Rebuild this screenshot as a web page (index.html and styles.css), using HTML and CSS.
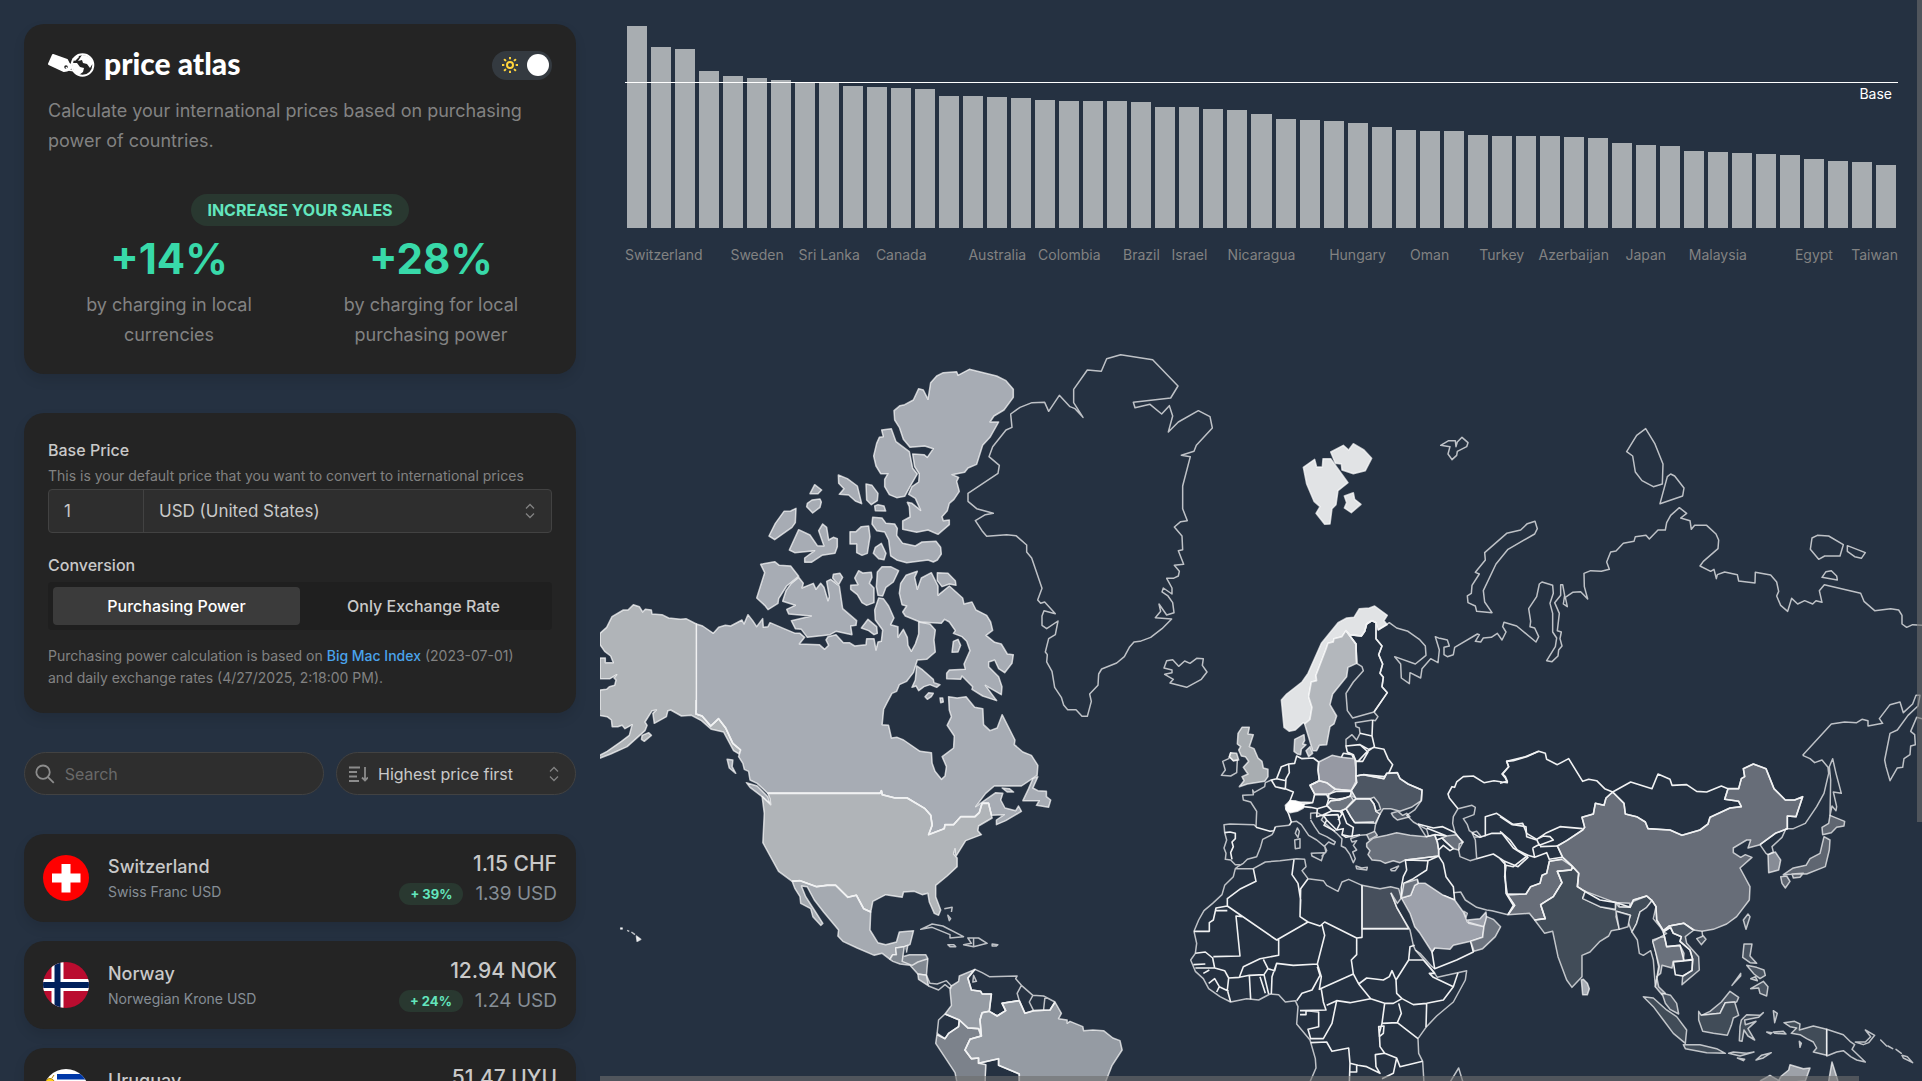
FILE: index.html
```html
<!DOCTYPE html>
<html lang="en">
<head>
<meta charset="utf-8">
<meta name="viewport" content="width=device-width, initial-scale=1">
<title>Price Atlas</title>
<link rel="stylesheet" href="styles.css">
</head>
<body>
<div class="app">
  <aside class="sidebar">
    <section class="card intro">
      <header class="brand-row">
        <a class="brand" href="#">
          <svg class="brand-icon" viewBox="0 0 47 26" aria-hidden="true">
            <path d="M5 3 19 8Q20 12 24 14Q22 19 16 19L1 12Z" fill="#fff" stroke="#fff" stroke-width="2" stroke-linejoin="round"/>
            <circle cx="18" cy="15" r="1.8" fill="#242424"/>
            <path d="M18 15Q21 20 27 18" fill="none" stroke="#fff" stroke-width="1.4"/>
            <circle cx="34.500" cy="13" r="10.800" fill="#242424" stroke="#fff" stroke-width="2"/>
            <path d="M34 3Q42 3 45 11L42 16 39 12 35 11 34 8 30 9ZM24 11 29 11 32 15 36 16 35 20 31 23Q24 20 24 11ZM24 7 30 3 31 5 27 9Z" fill="#fff"/>
          </svg>
          <span>price atlas</span>
        </a>
        <label class="theme">
          <input type="checkbox" checked aria-label="Dark theme">
          <svg viewBox="0 0 16 16" aria-hidden="true"><circle cx="8" cy="8" r="3"/><path d="M8 .5v1M8 14.500v1M.5 8h1M14.500 8h1M2.700 2.700l.7.7M12.600 12.600l.7.700M2.700 13.300l.7-.7M12.600 3.400l.7-.7"/></svg>
        </label>
      </header>
      <p class="lead">Calculate your international prices based on purchasing power of countries.</p>
      <p class="pill">INCREASE YOUR SALES</p>
      <div class="gains">
        <div><strong>+14%</strong><p>by charging in local currencies</p></div>
        <div><strong>+28%</strong><p>by charging for local purchasing power</p></div>
      </div>
    </section>

    <section class="card settings">
      <label class="title" for="amount">Base Price</label>
      <p class="hint">This is your default price that you want to convert to international prices</p>
      <div class="price-field">
        <input id="amount" type="text" value="1">
        <div class="picker">
          <select aria-label="Currency"><option>USD (United States)</option></select>
          <svg class="updown" viewBox="0 0 10 16" aria-hidden="true"><path d="M1 5.500 5 1.500 9 5.500M1 10.500 5 14.500 9 10.500"/></svg>
        </div>
      </div>
      <fieldset class="conversion">
        <legend class="title">Conversion</legend>
        <div class="segments">
          <label><input type="radio" name="mode" checked><span>Purchasing Power</span></label>
          <label><input type="radio" name="mode"><span>Only Exchange Rate</span></label>
        </div>
      </fieldset>
      <p class="note">Purchasing power calculation is based on <a href="#">Big Mac Index</a> (2023-07-01) and daily exchange rates (4/27/2025, 2:18:00 PM).</p>
    </section>

    <div class="filters">
      <div class="search">
        <svg viewBox="0 0 22 22" aria-hidden="true"><circle cx="9" cy="9" r="7.500"/><path d="M14.500 14.500 21 21"/></svg>
        <input type="text" placeholder="Search" aria-label="Search">
      </div>
      <div class="picker sort">
        <svg class="sort-icon" viewBox="0 0 20 16" aria-hidden="true"><path d="M1 1.500h11M1 6h8M1 10.500h8M1 15h10M17 1v13M14 11.500l3 3 3-3"/></svg>
        <select aria-label="Sort order"><option>Highest price first</option></select>
        <svg class="updown" viewBox="0 0 10 16" aria-hidden="true"><path d="M1 5.500 5 1.500 9 5.500M1 10.500 5 14.500 9 10.500"/></svg>
      </div>
    </div>

    <ul class="countries">
      <li class="card country">
        <svg class="flag" viewBox="0 0 46 46" aria-hidden="true"><path fill="#f00" d="M0 0h46v46H0z"/><path fill="#fff" d="M18.500 9h9v9.500H37.500v9H27.500V37.500h-9V27.500H9v-9h9.500z"/></svg>
        <div class="names"><h2>Switzerland</h2><p>Swiss Franc USD</p></div>
        <div class="prices"><b>1.15 CHF</b><div><span class="delta">+ 39%</span><span class="usd">1.39 USD</span></div></div>
      </li>
      <li class="card country">
        <svg class="flag" viewBox="0 0 46 46" aria-hidden="true"><path fill="#ba0c2f" d="M0 0h46v46H0z"/><path stroke="#fff" stroke-width="12" d="M14.500 0v46M0 23h46"/><path stroke="#00205b" stroke-width="6" d="M14.500 0v46M0 23h46"/></svg>
        <div class="names"><h2>Norway</h2><p>Norwegian Krone USD</p></div>
        <div class="prices"><b>12.94 NOK</b><div><span class="delta">+ 24%</span><span class="usd">1.24 USD</span></div></div>
      </li>
      <li class="card country">
        <svg class="flag" viewBox="0 0 46 46" aria-hidden="true"><path fill="#fff" d="M0 0h46v46H0z"/><path fill="#0038a8" d="M14 5h32v5.500H14zM14 15.500h32V21H14zM0 26h46v5H0zM0 36h46v5H0z"/><circle cx="7" cy="14" r="4.500" fill="#fcd116" stroke="#b8860b"/><path d="M2 12l-2-2M5 9 4 6M9 9l2-3" stroke="#b8860b"/></svg>
        <div class="names"><h2>Uruguay</h2><p>Uruguayan Peso USD</p></div>
        <div class="prices"><b>51.47 UYU</b><div><span class="delta">+ 23%</span><span class="usd">1.23 USD</span></div></div>
      </li>
    </ul>
  </aside>

  <main class="stage">
    <section class="chart" aria-label="Prices by country">
      <div class="plot">
        <div class="bars">
          <i style="height:202px"></i><i style="height:181px"></i><i style="height:179px"></i><i style="height:157px"></i><i style="height:152px"></i><i style="height:150px"></i><i style="height:148px"></i><i style="height:146px"></i><i style="height:146px"></i><i style="height:142px"></i><i style="height:141px"></i><i style="height:140px"></i><i style="height:139px"></i><i style="height:132px"></i><i style="height:132px"></i><i style="height:131px"></i><i style="height:130px"></i><i style="height:128px"></i><i style="height:127px"></i><i style="height:127px"></i><i style="height:127px"></i><i style="height:126px"></i><i style="height:121px"></i><i style="height:121px"></i><i style="height:119px"></i><i style="height:118px"></i><i style="height:114px"></i><i style="height:109px"></i><i style="height:108px"></i><i style="height:107px"></i><i style="height:105px"></i><i style="height:101px"></i><i style="height:98px"></i><i style="height:97px"></i><i style="height:97px"></i><i style="height:93px"></i><i style="height:92px"></i><i style="height:92px"></i><i style="height:92px"></i><i style="height:91px"></i><i style="height:90px"></i><i style="height:85px"></i><i style="height:83px"></i><i style="height:82px"></i><i style="height:77px"></i><i style="height:76px"></i><i style="height:75px"></i><i style="height:74px"></i><i style="height:73px"></i><i style="height:69px"></i><i style="height:67px"></i><i style="height:66px"></i><i style="height:63px"></i>
        </div>
        <div class="base-line"><span>Base</span></div>
      </div>
      <div class="labels">
        <span class="first" style="grid-column:1">Switzerland</span><span style="grid-column:6">Sweden</span><span style="grid-column:9">Sri Lanka</span><span style="grid-column:12">Canada</span><span style="grid-column:16">Australia</span><span style="grid-column:19">Colombia</span><span style="grid-column:22">Brazil</span><span style="grid-column:24">Israel</span><span style="grid-column:27">Nicaragua</span><span style="grid-column:31">Hungary</span><span style="grid-column:34">Oman</span><span style="grid-column:37">Turkey</span><span style="grid-column:40">Azerbaijan</span><span style="grid-column:43">Japan</span><span style="grid-column:46">Malaysia</span><span style="grid-column:50">Egypt</span><span class="last" style="grid-column:53">Taiwan</span>
      </div>
    </section>

    <svg class="map" viewBox="600 300 1322 781" role="img" aria-label="World map of prices">
      <!-- Arctic Canada and Alaska -->
      <g transform="translate(600 340) scale(.33333)">
        <g fill="#a7acb4">
          <path d="M1070 95 1074 106 1108 88 1190 108 1218 122 1240 148 1240 172 1212 210 1182 228 1170 246 1196 246 1170 292 1148 316 1130 373 1104 384 1094 397 1056 404 1076 412 1070 424 1078 454 1062 478 1048 490 1042 512 1026 530 1030 542 1048 540 1048 554 1014 583 984 570 950 577 908 568 908 543 930 531 928 500 922 487 936 490 962 511 946 475 926 463 936 440 956 426 958 402 944 380 938 342 972 344 982 352 1000 326 974 318 930 322 910 298 898 262 884 240 882 212 900 197 914 194 940 180 956 146 970 150 984 178 992 128 1010 108 1030 98Z"/>
          <path d="M845 270 874 266 888 305 928 335 938 385 952 402 930 440 914 469 890 473 868 464 854 440 854 418 864 401 842 401 828 378 821 348 830 310 838 292 850 290Z"/>
          <path d="M715 405 742 416 772 438 785 491 766 483 746 465 718 463 732 446 716 430ZM798 432 816 436 834 460 832 482 814 494 800 480ZM824 498 834 494 852 498 857 513 826 512ZM644 434 665 450 654 461 630 461ZM636 480 660 477 664 486 660 502 638 519 620 500 622 490ZM588 505 586 548 576 562 524 599 507 588 526 550 552 514 572 513Z"/>
          <path d="M596 569 630 585 652 617 672 618 656 572 668 552 680 562 686 600 700 592 712 596 712 620 705 640 666 646 634 667 614 667 614 654 644 632 584 638 568 630ZM750 575 768 575 784 560 806 558 810 590 802 640 786 646 770 638 770 612 750 612ZM820 640 826 622 844 610 858 640 852 659 836 656Z"/>
          <path d="M818 532 846 534 858 550 884 552 892 565 890 586 908 610 946 618 966 606 1008 604 1022 622 1024 642 1012 660 1000 666 984 660 920 668 890 660 872 648 866 600 854 576 830 572 816 552Z"/>
          <path d="M482 673 524 665 538 676 572 678 596 709 560 738 536 776 534 790 504 809 494 796 470 774 494 698Z"/>
          <path d="M596 712 610 730 606 744 640 730 648 748 662 730 672 742 684 782 688 770 680 724 692 718 718 738 728 806 770 842 768 856 752 858 756 884 708 874 690 884 622 892 604 868 586 866 574 842 634 828 566 822 560 808 586 796 548 784 558 752 574 730ZM700 703 720 700 728 712 716 734 706 724 698 714Z"/>
          <path d="M776 692 788 699 814 697 816 712 808 730 822 744 822 788 800 796 786 788 772 764 752 748 752 736 774 734 764 714ZM846 680 872 680 896 692 880 726 858 742 848 768 834 766 829 740 832 696ZM804 838 830 860 832 880 822 884 806 872 784 864Z"/>
          <path d="M952 694 944 712 952 748 964 714 994 698 1014 738 1014 766 1048 738 1088 774 1092 792 1116 786 1128 810 1160 826 1172 846 1178 871 1158 886 1184 907 1204 912 1222 942 1240 944 1236 970 1214 998 1196 986 1184 960 1166 966 1166 980 1196 1010 1206 1040 1204 1064 1156 1036 1190 1082 1148 1068 1116 1048 1118 1040 1086 1008 1082 1018 1040 1016 1040 1000 1048 990 1096 988 1092 972 1110 932 1100 904 1086 890 1060 880 1066 872 1048 846 1034 838 1024 850 960 846 916 828 908 816 920 798 906 794 898 760 902 730 918 706Z"/>
          <path d="M1012 698 1044 700 1066 722 1068 736 1048 732 1026 740 1012 722ZM1060 904 1074 898 1082 916 1074 936 1056 937ZM950 978 968 990 1000 1018 1002 1028 1020 1034 1010 1042 990 1034 972 1040 956 1052 948 1038 936 1042 946 1020ZM986 1058 1000 1060 994 1070 982 1078 975 1070ZM1020 1074 1028 1074 1030 1086 1022 1088Z"/>
          <path d="M289 1110V852L308 858 340 880 356 862 376 856 392 858 426 840 432 852 444 824 458 842 470 860 488 836 490 862 504 860 510 848 552 866 586 880 600 880 614 892 598 912 658 914 674 928 686 916 678 900 684 890 708 884 730 908 748 908 764 918 798 914 800 896 822 896 828 930 834 906 844 904 848 870 826 840 824 810 836 774 850 776 866 798 882 834 872 854 894 860 894 892 910 868 922 892 924 916 934 934 946 912 956 882 956 846 990 852 1006 870 1002 900 1006 936 980 958 952 960 940 998 920 1024 898 1034 890 1054 876 1060 860 1090 850 1110"/>
        </g>
        <path fill="#b0b4b8" d="M0 1110V1050L20 1048 28 1040 44 1036 48 1020 42 1014 50 1004 30 1016 0 1016V954H16V968H40L32 948 14 934 0 914V880L20 862 36 830 70 810 84 810 100 794 118 800 128 816 136 808 154 810 156 822 186 824 206 834 242 838 258 836 289 852V1110"/>
      </g>

      <!-- The Americas -->
      <g transform="translate(600 700) scale(.35714 .33333)">
        <path fill="#b0b4b8" d="M269 30 269 42 286 48 310 78 332 56 352 84 372 130 394 150 390 162 374 152 346 96 312 88 284 62 256 46 228 48 198 30 190 32 186 50 152 70 148 40 158 30 146 32 126 66 132 76 126 92 76 140 30 162 -4 176V168L20 154 60 124 82 106 90 74 70 86 62 76 50 80 34 80 32 60 20 50 -4 46V30M118 106 136 98 144 106 124 124 116 118Z"/>
        <g fill="#a7acb4">
          <path d="M269 30 269 42 286 48 310 78 332 56 352 84 372 130 394 150 388 170 400 190 404 208 416 214 420 240 440 250 470 280 784 280 788 272 790 284 826 294 860 294 910 326 926 346 930 376 920 404 964 386 966 374 990 374 1010 350 1050 350 1062 338 1070 310 1088 310 1096 346 1132 344 1110 360 1110 374 1136 362 1180 334 1172 318 1164 332 1134 324 1122 300 1128 280 1108 278 1052 320 1080 280 1104 258 1180 258 1224 226 1226 196 1208 166 1184 156 1160 134 1162 120 1126 44 1112 84 1092 92 1074 74 1072 26 1049 22 1025 -10 1000 -6 976 -10 978 30 984 50 972 76 992 108 990 144 958 170 970 200 966 228 956 238 938 214 930 190 928 158 896 154 850 120 832 112 816 114 808 76 790 74 794 30"/>
          <path d="M1226 230 1212 264 1226 272 1250 274 1250 290 1262 300 1256 322 1222 316 1230 302 1184 302 1200 266 1212 236ZM1126 264 1146 266 1158 276 1140 276ZM410 248 440 258 470 290 476 312 454 290 420 262ZM356 178 372 180 370 200 380 220 362 204Z"/>
        </g>
        <path fill="#b0b4b8" d="M470 280 784 280 788 272 790 284 826 294 860 294 910 326 926 346 930 376 920 404 964 386 966 374 990 374 1010 350 1050 350 1062 338 1070 310 1088 310 1096 346 1098 354 1060 378 1058 392 1068 404 1024 422 1010 446 996 470 994 446 990 462 1000 474 1000 500 972 528 940 556 940 590 954 630 948 646 936 640 922 606 918 580 902 584 880 574 850 576 846 592 800 584 764 604 758 636 738 626 718 586 694 592 660 556 636 556 606 560 560 542 538 544 500 514 464 444 456 428 460 340 454 290 478 314 476 296Z"/>
        <path fill="#a5aab1" d="M538 544 560 542 606 560 636 556 660 556 694 592 718 586 738 626 758 636 756 690 778 728 800 734 830 726 838 696 878 692 868 734 852 740 828 744 830 764 818 766 812 778 790 760 768 766 720 744 680 724 666 708 668 690 626 636 600 600 580 560 564 558 576 590 600 630 624 670 618 676 596 650 590 626 562 610 560 590 546 566Z"/>
        <g fill="#828992"><path d="M812 778 820 764 830 764 828 744 852 740 848 770 866 764 912 764 918 776 914 826 890 822 868 796 840 792 820 784Z"/><path d="M848 770 846 784 874 796 890 786 918 776M852 740 862 736 858 758"/><path fill="#a5aab1" d="M890 822 914 826 920 858 892 838Z"/></g>
        <path fill="none" d="M914 826 924 850 944 852 970 842 984 858 980 866 966 854 948 870 920 858M898 688 930 672 960 678 1018 710 980 714 980 704 930 682ZM974 734 990 734 996 740 980 740ZM1030 714 1060 714 1084 730 1046 740 1018 734 1040 730ZM1046 714V740M1098 732 1114 734 1110 738 1098 738ZM964 626 986 622 984 636M974 646 982 656 978 662Z"/>
        <path fill="#e1e3e5" d="M58 684 62 684 62 687 58 687ZM76 691 82 694M88 696 98 704M102 708 114 718 104 724Z"/>
        <path fill="#959ba3" d="M984 858 1004 844 1006 828 1050 808 1030 834 1040 870 1066 874 1070 882 1096 882 1090 934 1070 938 1064 960 1070 1006 1060 986 1030 984 1006 960 966 942 984 916 980 870Z"/>
        <path fill="none" d="M1050 808 1070 818 1090 830 1168 828 1164 836 1180 856 1168 880 1174 902 1126 910 1136 932 1112 948 1090 934M1046 826 1054 844 1044 846ZM1180 856 1212 886 1242 888 1274 906M1212 886 1202 906 1214 932M1246 890 1242 930M966 942 948 960 944 1000M1078 1143 1080 1094 1060 1090"/>
        <path fill="#7c828b" d="M1006 960 1030 984 1060 986 1066 1008 1036 1018 1022 1050 1040 1076 1060 1074 1060 1090 1080 1094 1078 1150 1000 1150 994 1118 940 1030 944 1000 966 1016 976 1000 1004 980Z"/>
        <path fill="#959ba3" d="M1070 938 1090 934 1112 948 1136 932 1126 910 1174 902 1190 940 1214 932 1260 930 1274 906 1292 940 1284 956 1308 960 1308 970 1316 964 1352 980 1354 992 1380 990 1410 992 1436 1014 1456 1022 1462 1050 1434 1096 1414 1150H1174V1122L1116 1096 1116 1076 1060 1090 1060 1074 1040 1076 1022 1050 1036 1018 1068 1008 1064 960Z"/>
        <path class="borders" d="M269 0V42L286 48 310 78 332 56 352 84 372 130 394 150M470 280 784 280 788 272 790 284 826 294 860 294 910 326 926 346 930 376 920 404 964 386 966 374 990 374 1010 350 1050 350 1062 338 1070 310 1088 310 1096 346M538 544 560 542 606 560 636 556 660 556 694 592 718 586 738 626 758 636M1070 938 1090 934 1112 948 1136 932 1126 910 1174 902 1190 940 1214 932 1260 930 1274 906M1174 1143V1122L1116 1096 1116 1076 1060 1090 1060 1074 1040 1076 1022 1050 1036 1018 1068 1008 1064 960 1070 938M1050 808 1030 834 1040 870 1066 874 1070 882 1096 882 1090 934M966 942 1006 960 1030 984 1060 986 1068 1008M1006 960 1004 980 976 1000 966 1016 944 1004"/>
      </g>

      <!-- Greenland, Iceland, Svalbard -->
      <g transform="translate(960 340) scale(.33333)">
        <path fill="none" d="M369 232 341 188 341 148 382 90 424 94 440 56 482 44 578 59 654 138 632 174 520 187 525 203 570 193 605 222 628 197 638 228 625 276 655 246 715 212 750 230 757 264 709 316 702 334 664 346 691 350 668 438 668 506 682 542 662 545 643 561 666 588 668 629 655 632 671 673 643 676 658 694 655 708 640 715 620 715 636 744 636 762 610 744 606 756 624 768 638 788 642 818 620 825 597 792 602 814 586 833 635 837 606 866 572 892 540 904 522 906 508 922 493 950 470 969 425 987 416 1002 414 1036 389 1062 394 1084 382 1129 366 1129 348 1109 323 1109 311 1095 304 1072 284 1042 276 994 260 966 262 944 256 936 266 896 286 884 294 843 260 866 246 856 246 828 252 812 286 821 254 786 242 790 233 780 246 745 215 654 200 636 200 615 168 587 140 584 80 589 66 572 46 542 76 524 100 520 50 506 24 484 24 460 114 400 118 376 87 350 98 320 138 270 156 262 152 222 180 202 216 188 254 187 266 214 298 166 330 200 345 206ZM620 962 638 959 656 979 674 963 690 970 710 955 730 956 727 976 741 996 724 1018 680 1042 630 1029 640 1018 614 1003 636 998 636 990 612 984Z"/>
        <path fill="#e1e3e5" d="M1030 382 1064 358 1070 381 1087 381 1089 356 1112 356 1164 428 1134 452 1128 494 1116 506 1110 552 1094 553 1068 520 1080 500 1062 484 1040 432ZM1112 336 1150 316 1166 330 1180 311 1212 330 1235 355 1216 392 1180 401 1146 390 1144 372 1126 370ZM1153 468 1180 458 1184 478 1203 493 1174 518 1153 504 1160 488Z"/>
      </g>

      <!-- Europe -->
      <g transform="translate(1180 590) scale(.33333)">
        <path fill="#e1e3e5" d="M622 76 612 92 622 104 594 120 588 98 576 92 560 102 554 124 544 138 508 134 498 122 486 140 462 146 460 156 444 160 438 178 408 256 410 272 394 276 386 320 396 352 390 388 378 404 370 398 346 420 328 424 312 412 304 330 320 312 366 276 384 250 424 160 474 98 500 84 522 82 538 56 568 54 584 48Z"/>
        <path fill="#b3b7bc" d="M498 122 528 162 530 220 504 232 500 260 458 312 450 344 470 378 462 402 450 410 440 464 418 466 410 482 398 482 374 402 390 388 396 352 386 320 394 276 410 272 408 256 438 178 444 160 460 156 462 146 486 140ZM372 434 344 448 342 484 352 492 362 494 364 478 378 464 368 462 374 452ZM378 482 390 470 398 490 386 500Z"/>
        <path fill="none" d="M498 122 508 134 544 138 554 124 560 102 576 92 588 98 588 146 606 168 596 194 608 222 600 250 610 262 606 290 622 308 582 366 518 384 502 362 498 310 520 276 550 242 546 230 530 220 528 162ZM594 120 628 98 650 114 684 124 718 148 736 168 738 196 706 222 644 200 662 222 664 264 688 281 690 248 722 264 726 236 752 206 774 218 778 180 766 140 780 146M582 366 594 380 586 392 578 390"/>
        <path class="borders" d="M588 98V146L606 168 596 194 608 222 600 250 610 262 606 290 622 308 582 366M588 98 576 92 560 102 554 124 544 138 508 134 498 122 528 162 530 220"/>
        <path fill="#a8adb1" d="M186 412 208 412 204 432 220 434 208 470 222 476 234 504 246 514 250 534 264 538 264 560 254 574 202 582 178 590 192 572 186 560 204 552 190 532 206 514 196 500 184 498 176 480 182 470 172 462 174 430ZM152 488 170 490 176 510 160 512 148 500Z"/>
        <path fill="none" d="M152 488 148 500 160 512 172 510 170 548 152 558 124 556 136 540 128 514 146 506Z"/>
        <path fill="#9699a3" d="M416 516 456 496 484 502 524 506 528 540 528 574 514 602 470 598 456 590 440 578 418 572 414 540ZM390 586 418 572 440 578 466 598 450 612 404 612Z"/>
        <path class="borders" d="M344 520 350 498 366 506 400 504 416 516 414 540 418 572 390 586 404 612 398 638 346 636 330 632 340 606 316 596 318 566 328 548 326 522ZM326 522 304 530 290 566 274 570 286 590 316 598M290 566 318 572M228 712 270 724 282 722 286 710M328 706 334 696 326 672 318 656 330 632 340 606 316 596 286 590 274 570M372 642 398 638 404 614 440 614 446 626 440 648 412 656 392 652 370 650ZM446 612 470 604 514 604 510 622 470 628 446 624ZM536 512 560 486 580 472 612 478 624 506 638 524 626 550 612 560 550 554 528 558 528 514ZM578 390 576 438 540 430M576 438 584 472 566 478 540 464 498 468M498 468 502 486 520 494 528 514 548 514 564 486 540 464ZM484 502 490 490 516 494 520 504"/>
        <path fill="none" d="M274 570 256 578 254 590 222 608 218 600 220 614 188 616 190 630 212 636 230 664 228 712M286 710 328 706M578 390 526 398 528 410 538 414 540 430 530 450 516 434 498 448 498 468"/>
        <path fill="#fff" d="M316 646 330 632 346 632 372 642 370 654 352 664 330 668 318 660Z"/>
        <path fill="#6d747f" d="M440 646 452 632 478 630 512 618 520 630 498 656 480 664 456 662Z"/>
        <path fill="#59626f" d="M498 656 528 626 570 626 582 642 588 664 600 672 586 700 524 698 512 680Z"/>
        <path fill="#4d5663" d="M514 602 530 578 528 558 550 554 612 566 620 550 652 548 660 566 684 582 726 600 724 632 694 652 660 664 632 656 610 656 600 672 588 664 602 658 596 640 582 622 570 626 528 626 516 618ZM634 670 654 664 668 676 680 670 690 680 652 690 640 680Z"/>
        <path fill="none" d="M724 632 704 660 680 676 700 696 740 718 746 740M600 672 586 706 582 732M834 656 876 646 886 652 882 674 850 686 862 704 868 722 880 730M834 656 820 680 818 700 826 730 848 758M392 688 392 670 412 668 430 680 424 690 470 730"/>
        <path class="borders" d="M834 656 808 624 804 612 816 590 824 592 830 576 850 560 880 558 912 578 942 572 966 576 982 578 976 564 966 552 986 530 980 514 1000 512 1040 500 1076 484M430 676 474 674 480 700 470 720 440 690 430 676M486 664 500 700 520 712 516 740 486 734 490 716 470 720M524 698 582 696M412 656 410 680 430 674 456 662 440 646M440 690 432 706 466 724M456 662 480 664 486 672 474 690M480 664 498 656 528 626 514 602 530 578 528 558 550 554 612 566 620 550 652 548 660 566 684 582 726 600 724 632M498 656 512 680 524 698M528 626 570 626 582 642 588 664M390 586 418 572 440 578 466 598 514 602M512 618 478 630 452 632 440 646"/>
      </g>

      <!-- Africa and the Middle East -->
      <g transform="translate(1180 820) scale(.33333)">
        <path fill="#464f5c" d="M546 196 600 206 632 200 656 206 664 234 652 250 634 220 650 262 686 326 546 326Z"/>
        <path fill="none" d="M176 138 190 130 202 118 230 110 242 80 248 58 276 44 282 34M228 20 222 14 150 12 132 14 134 38 140 60 132 84 138 100 136 118 152 120 166 134 180 134M334 6 350 4 364 14 386 46 410 60 434 80 438 96 426 108 440 92 434 78 446 66 462 74 466 66 440 50 418 40 404 20 392 0M394 100 432 98 424 122 396 108ZM344 60 360 56 360 84 346 86ZM346 40 352 24 358 34 354 52ZM470 40 486 56 484 78 496 84 510 104 520 128 526 116 518 96 530 90 520 76 530 62 516 66 512 56 540 46 560 44M528 138 545 144 562 142 560 150 530 146ZM632 148 656 138 646 152 634 152Z"/>
        <path class="borders" d="M134 38 150 36 166 40 166 56 156 66 160 80 152 98 156 118M486 44 498 52 540 44"/>
        <path fill="#69707b" d="M560 70 580 54 620 46 650 38 690 46 738 50 764 44 772 66 776 90 776 108 728 114 676 120 660 128 640 122 616 130 600 122 576 120 564 104 570 92 560 80ZM560 44 584 34 592 46 568 60Z"/>
        <path fill="#69707b" d="M786 54 800 48 828 44 850 66 838 72 836 90 820 86 798 66Z"/>
        <path fill="none" d="M714 12 738 50M826 38 848 68 836 90 840 110 870 122 890 116 886 60 876 38M876 38 890 34 904 50 880 52"/>
        <path class="borders" d="M714 12 760 24 788 20 826 38M738 50 764 44 800 48M770 60 786 54 798 66 820 86 810 92 790 76 776 90M740 24 770 36 800 48M878 40 900 52 936 40 966 40 1000 84 1044 112 1014 140 974 124 940 102 890 116M916 50V-10L950 -20 1000 14 1038 20 1040 50 1070 60M764 44 772 66 776 90 776 108 728 114 676 120"/>
        <path fill="none" d="M632 218 650 262 672 300 690 330 700 376 706 390 740 430 764 460 772 472 860 452 856 480 820 546 770 588 738 622 714 656 716 700 728 724 732 790M176 138 166 146 160 170 134 196 126 224 98 250 72 272 56 300 42 334 50 370 46 400 32 420 46 454 70 476 86 506 120 530 152 546 200 536 236 540 270 522 296 524 316 546 346 542 354 560 350 612 390 660 406 716 408 744 388 790M166 146 220 146 256 126 300 122 350 116 374 118 378 140 366 152 384 176 430 182 440 196 474 214 486 186 506 178 546 196M808 790 836 744 850 790"/>
        <g class="borders">
          <path d="M220 146 228 184 182 206 142 236 142 258 290 360 384 306 360 290 362 240 354 190 336 164 342 118M384 176 362 206 360 290M384 306 420 318 434 306 530 354 546 352 546 196M142 258 108 264 100 300 88 308 88 334 42 334M142 272 104 272M186 290 168 288 180 408 100 410M46 400 76 396 98 414 104 444 134 452 146 474 178 472 190 440 240 416 296 406 296 360 284 358M250 418 264 446 284 452 290 430 340 436 412 432 434 346 426 314M412 432 424 470 418 508 520 462 514 420 530 404 530 354M290 430 276 470 274 522M412 440 420 466 396 510 366 520 350 542M264 446 252 464 266 522M252 464 208 466 212 538M208 466 178 472M240 470 256 520M146 474 142 510 152 546M40 434 76 432M46 444 104 444M70 460 88 450M86 490 104 476 118 500 110 516M118 500 146 514M424 508 430 546 438 570 360 572M360 584 378 584 378 572M380 572 416 576 416 620 384 628 392 656 430 656 456 610 470 542 440 556M470 542 510 548 572 536 536 492 520 462M536 492 560 474 610 480 628 470 636 452 648 480 686 420 690 380 704 376M648 480 650 520 666 536 640 550 614 550 572 536M686 420 730 420 756 450 764 460 748 460 760 472 820 500 790 540 740 550 700 554 666 536M820 500 834 458M740 550 738 622M656 550 664 580 652 608 714 656M614 550 606 610 652 608M596 620 612 618 610 640 598 650ZM606 610 598 640 600 680 614 700 586 704 588 740 600 760 560 740 534 736 510 730 506 684 456 694 440 666 392 668M614 700 650 714 660 740 728 724M650 714 640 760 606 776M510 730 508 790M530 736 530 756 508 756M546 326H686"/>
          <path d="M764 384 756 396 764 446 830 420 880 396 872 364M664 234 664 202 670 170 680 150 676 120 744 122 740 150 700 176 680 186 672 190 668 230M712 178 714 190M744 122 776 108 790 130 798 170 820 200 824 240 790 226M974 124 978 220 1000 256 984 284M978 222 1034 226"/>
        </g>
        <path fill="none" d="M820 218 842 216 856 240 890 262 920 270 936 272 984 284M852 274 862 280 858 292ZM706 390 720 400 756 440 764 446"/>
        <path fill="#9da1ab" d="M664 234 692 226 704 196 714 190 736 190 790 226 824 240 850 276 862 306 912 320 908 352 872 364 820 376 810 388 764 384 756 396 720 340 704 320 690 280ZM862 300 900 296 918 276 920 296 912 320 866 310Z"/>
        <path fill="#6d747f" d="M912 320 920 290 940 298 962 320 946 350 908 386 882 394 872 364 908 352ZM672 190 712 178 714 190 704 196 692 226 664 234Z"/>
      </g>

      <!-- Northern Russia -->
      <g transform="translate(1440 400) scale(.33333)">
        <path fill="none" d="M0 715 22 720 28 738 12 742 12 764 22 770 40 764 44 742 112 702 118 704 106 724 122 726 130 714 154 712 172 700 186 720 198 696 188 680 192 667 230 678 288 726 296 710 284 684 270 680 272 664 266 626 290 590 298 552 306 546 338 556 340 580 330 610 338 640 338 696 350 714 346 740 320 782 336 785 354 768 356 750 366 738 360 716 364 696 352 692 358 640 344 608 362 586 362 554 368 554 374 586 370 612 382 620 376 592 398 577 422 575 443 597 433 560 432 520 452 512 484 514 508 508 500 486 512 456 528 453 550 430 582 424 586 410 618 406 628 417 654 390 676 390 680 368 692 346 718 323 740 340 722 354 750 362 754 388 764 376 800 376 828 402 836 420 834 446 790 484 780 498 812 514 822 508 829 536 832 524 854 516 892 524 896 543 945 549 946 517 992 525 1010 546 1016 574 1010 588 1022 616 1043 634 1055 595 1073 612 1094 602 1118 612 1128 602 1146 607 1138 572 1153 554 1262 580 1272 604 1304 632 1352 626 1376 630 1386 646 1386 672 1400 682 1418 674 1446 676M285 364 292 386 284 402 204 448 168 492 130 572 134 606 156 638 110 634 106 618 84 608 82 588 94 580 96 556 118 522 106 517 136 480 134 458 200 400 242 390 262 371ZM2 136 26 122 46 122 48 140 52 126 66 112 84 128 80 140 52 154 50 166 36 179 24 162 30 140ZM617 86 644 130 669 192 667 252 640 260 606 242 586 216 578 168 560 155 590 106ZM692 222 704 228 732 264 728 288 660 311 682 230ZM1116 414 1132 406 1166 408 1210 434 1200 468 1154 468 1136 478 1111 448ZM1222 437 1276 458 1264 475 1244 470 1222 454ZM1146 532 1158 515 1174 512 1190 528 1192 540Z"/>
        <path fill="none" d="M1088 1066 1174 972 1214 966 1250 968 1266 958 1284 962 1284 978 1328 970 1318 956 1350 914 1380 906 1390 938 1418 912 1428 886 1440 886 1434 918 1404 946 1372 990 1350 1000 1334 1080 1338 1100 1350 1142 1372 1104 1388 1102 1392 1076 1410 1064 1412 1038 1426 1034 1424 1004 1412 994 1430 952 1446 956"/>
      </g>

      <!-- Asia and Oceania -->
      <g transform="translate(1500 720) scale(.33333)">
        <path class="borders" d="M0 190 22 184 16 170 8 162 26 140 20 124 76 110 116 94 136 100 140 118 172 134 206 116 248 184 266 178 290 182 314 206 338 216M0 290 36 314 68 310 80 340 110 358 140 338 180 320 248 326M110 358 118 376 160 360 150 350 130 348ZM120 380 172 378M98 384 104 412 84 406M104 412 140 398 148 418 186 412M98 384 120 372M0 334 30 360 52 390 84 406 40 440 18 436 14 470 22 524M0 416 18 436M338 216 392 186 456 206 474 162 510 178 516 196 560 194 590 214 620 216 664 198 684 206"/>
        <path fill="#676d78" d="M22 524 78 522 92 500 120 490 126 466 140 460 148 424 186 418 218 440 214 450 172 454 186 488 160 530 122 554 136 596 104 600 88 580 24 584 44 556Z"/>
        <path fill="#676d78" d="M338 216 372 250 376 282 410 290 436 306 444 326 510 330 546 346 600 330 624 312 630 292 690 264 724 260 716 244 674 238 684 206 716 206 724 176 734 170 730 146 760 132 798 146 822 206 856 240 884 240 908 230 888 290 862 288 862 326 826 340 780 374 744 384 752 360 740 360 700 384 700 398 722 412 736 404 756 412 720 444 750 500 748 540 710 590 680 612 640 628 606 634 580 630 552 610 508 618 490 632 470 600 468 560 456 542 440 528 400 540 390 562 350 548 300 540 250 512 232 500 236 460 218 440 188 412 172 378 200 362 248 330 254 322 246 292 280 282 286 250 312 256 318 234Z"/>
        <path fill="#414c58" d="M218 440 236 460 232 500 256 514 248 534 300 560 346 570 348 548 356 560 390 562 400 544 440 528 456 542 440 564 420 576 410 610 396 636 384 606 392 586 350 574 348 590 358 628 334 632 326 648 300 664 270 696 246 706 246 770 216 802 200 780 174 710 158 634 134 640 104 600 136 596 122 554 160 530 186 488 172 454 214 450Z"/>
        <path fill="#253141" d="M348 574 390 586 384 620 358 628ZM256 514 346 548 346 568 300 560 248 536ZM356 548 390 550 388 560 358 560ZM396 636 410 610 420 576 440 562 456 542 468 560 460 596 480 620 490 636 500 640 480 652 458 660 468 700 476 740 466 800 460 720 452 692 430 706 418 700 412 660Z"/>
        <path fill="#6a717c" d="M458 664 480 652 494 650 500 680 540 676 552 700 550 722 520 724 516 744 486 736 482 760 470 770 476 800 496 820 486 824 466 800 478 740 468 700Z"/>
        <path fill="#4a5461" d="M508 618 552 610 582 630 556 650 560 670 596 710 598 750 546 794 548 770 576 750 578 718 570 690 540 664 544 650 520 640ZM590 656 610 648 618 658 604 674ZM730 600 744 582 750 590 738 628Z"/>
        <path class="borders" d="M490 636 512 622 520 640 544 650 540 664 570 690 578 718 552 722 540 676 500 680ZM520 726 578 720 576 752 548 768 526 764ZM338 216 318 234 312 256 286 250 280 282 246 292 254 322 248 330 200 362 172 378 188 412 218 440 236 460 232 500 250 512 300 540 350 548 390 562 400 540 440 528 456 542 468 560 470 600 490 632 508 618 552 610 580 630M338 216 372 250 376 282 410 290 436 306 444 326 510 330 546 346 600 330 624 312 630 292 690 264 724 260 716 244 674 238 684 206 716 206 724 176 734 170 730 146 760 132 798 146 822 206 856 240 884 240 908 230 888 290 862 288 862 326 826 340 780 374M22 524 78 522 92 500 120 490 126 466 140 460 148 424 186 418M218 440 214 450 172 454 186 488 160 530 122 554 136 596 104 600M24 584 44 556 22 524"/>
        <path fill="#4a5461" d="M486 820 512 826 530 850 536 882 510 868 496 850ZM604 886 630 874 664 846 690 814 716 832 710 846 676 848 660 880ZM732 672 756 672 750 708 770 730 750 728 728 712ZM740 736 770 742 792 750 796 766 780 776 762 762ZM752 776 772 782 766 770ZM752 806 790 784 804 800 800 828 780 820 776 804ZM722 760 722 768 696 796Z"/>
        <path fill="#414c58" d="M430 830 460 834 500 870 530 890 560 930 556 970 520 940 490 900 460 860ZM550 974 600 974 650 986 676 1000 620 998 556 986ZM596 874 604 886 660 880 676 848 704 846 716 886 700 894 694 916 682 946 640 940 608 934 596 900ZM724 900 740 884 780 886 790 878 776 892 734 900 736 914 768 904 744 926 764 960 744 948 732 930 726 964 718 962 720 920ZM820 872 832 880 824 908ZM800 936 816 938 812 942ZM820 936 850 934 858 942 824 940ZM686 1000 700 996 740 1000 762 996 720 1008ZM712 1014 734 1018 730 1022ZM768 1020 784 1006 814 998 790 1014ZM898 964 904 970 900 982ZM852 908 884 904 900 912 898 930 940 918 980 928 980 1006 940 996 950 984 940 966 920 956 900 944 874 940 890 924 870 920Z"/>
        <path fill="none" d="M980 928V1008L1010 996 1030 992 1052 1010 1070 1020 1096 1026 1056 988 1064 974 1052 966 1030 944ZM1066 966 1096 966 1112 950 1096 930 1124 946 1106 968 1090 974ZM1142 960 1160 978ZM1164 978 1178 986ZM1188 988 1204 1000ZM1206 1006 1222 1010 1238 1028 1210 1014ZM606 634 608 648"/>
        <path fill="#9da1a8" d="M780 1083 810 1066 840 1083M844 1068 866 1050 870 1034 910 1046 930 1044 916 1083 830 1090ZM986 1083 996 1026 1014 1083"/>
        <path fill="#a7acb4" d="M244 780 250 778 262 790 268 806 262 824 248 824Z"/>
        <path fill="#878c96" d="M804 404 826 396 842 420 836 450 806 458Z"/>
        <path fill="none" d="M780 374 798 400 804 404 820 396 816 380 846 352 858 326"/>
        <path fill="#5f6671" d="M972 350 990 360 988 390 976 440 920 462 900 462 886 462 850 464 880 444 918 436 930 416 960 400ZM966 322 986 310 990 286 1034 304 1032 318 1010 322 994 338 968 344ZM842 470 860 468 870 484 856 504 846 490ZM876 462 910 460 900 472 880 474Z"/>
        <path fill="none" d="M858 326 880 326 916 310 950 260 972 220 986 160 984 142 966 120 944 128 930 116 908 106M998 116 1008 160 1024 220 1000 216 1010 260 1008 272 996 258 990 286 992 180 988 140Z"/>
      </g>
    </svg>
  </main>
  <div class="scroll-y"></div>
  <div class="scroll-x"></div>
</div>
</body>
</html>
```
FILE: styles.css
```css
* { box-sizing: border-box; }

body {
  margin: 0;
  background: #253141;
  color: #c9c9c9;
  font-family: Inter, "Liberation Sans", sans-serif;
  font-size: 16px;
}

h2, p, ul, fieldset { margin: 0; padding: 0; border: 0; }

input, select { font: inherit; color: inherit; }

.app {
  position: relative;
  display: flex;
  height: 100vh;
  overflow: hidden;
}

/* Sidebar */
.sidebar {
  flex: 0 0 600px;
  display: flex;
  flex-direction: column;
  gap: 39px;
  padding: 24px;
  overflow: hidden;
}

.card {
  flex-shrink: 0;
  background: #242424;
  border-radius: 20px;
  box-shadow: 0 6px 12px rgba(0, 0, 0, .1);
}

.intro { padding: 24px; }

.brand-row {
  display: flex;
  align-items: center;
  justify-content: space-between;
  height: 34px;
}

.brand {
  display: flex;
  align-items: center;
  gap: 9px;
  color: #fff;
  font-family: Lato, sans-serif;
  font-size: 30px;
  font-weight: 900;
  line-height: 28px;
  text-decoration: none;
}

.brand span { padding-bottom: 4px; }

.brand-icon { width: 47px; height: 26px; }

.theme {
  display: flex;
  align-items: center;
  width: 60px;
  height: 29px;
  padding: 0 10px;
  border-radius: 15px;
  background: #343a40;
  justify-content: space-between;
}

.theme svg { width: 16px; height: 16px; fill: none; stroke: #ffd43b; stroke-width: 2; stroke-linecap: round; }

.theme input {
  order: 2;
  appearance: none;
  flex: none;
  width: 22px;
  height: 22px;
  margin: 0 -7px 0 0;
  border-radius: 50%;
  background: #fff;
}

.lead, .gains p {
  color: #828282;
  font-size: 18px;
  line-height: 30px;
}

.lead { margin-top: 14px; }

.pill {
  width: fit-content;
  margin: 38px auto 0;
  padding: 0 16px;
  border-radius: 16px;
  background: #293830;
  color: #63e6be;
  font-size: 16px;
  font-weight: 700;
  line-height: 32px;
}

.gains {
  display: grid;
  grid-template-columns: 1fr 1fr;
  gap: 20px;
  margin-top: 8px;
  text-align: center;
}

.gains strong {
  display: block;
  color: #38d9a9;
  font-size: 42px;
  line-height: 50px;
}

.gains p { padding: 0 28px; margin-top: 6px; }

.settings { padding: 24px; }

.title {
  display: block;
  padding: 0;
  font-size: 16px;
  font-weight: 500;
  line-height: 26px;
}

.hint, .note {
  color: #828282;
  font-size: 14px;
  line-height: 22px;
}

.hint { margin-top: 2px; }
.note { margin-top: 15px; padding-right: 20px; }
.note a { color: #4aa3ec; text-decoration: none; font-weight: 500; }

.price-field {
  display: flex;
  height: 44px;
  margin-top: 2px;
  border: 1px solid #424242;
  border-radius: 4px;
  background: #2e2e2e;
  font-size: 17px;
}

.price-field > input {
  width: 95px;
  padding: 0 15px;
  border: 0;
  border-right: 1px solid #424242;
  background: none;
}

.picker { position: relative; flex: 1; display: flex; align-items: center; }

.picker select {
  appearance: none;
  width: 100%;
  height: 100%;
  padding: 0 15px;
  border: 0;
  background: none;
}

.updown {
  position: absolute;
  right: 16px;
  width: 10px;
  height: 16px;
  fill: none;
  stroke: #828282;
  stroke-width: 1.3;
  pointer-events: none;
}

.conversion { margin-top: 19px; min-width: 0; }

.segments {
  display: flex;
  height: 48px;
  margin-top: 4px;
  padding: 5px;
  border-radius: 4px;
  background: #1f1f1f;
}

.segments label { flex: 1; display: flex; position: relative; }

.segments input { position: absolute; appearance: none; margin: 0; }

.segments span {
  flex: 1;
  border-radius: 4px;
  font-weight: 500;
  line-height: 38px;
  text-align: center;
}

.segments input:checked + span { background: #3b3b3b; color: #fff; }

/* Search and sort */
.filters {
  display: grid;
  grid-template-columns: 5fr 4fr;
  flex-shrink: 0;
  gap: 12px;
  height: 43px;
}

.search {
  min-width: 0;
  display: flex;
  align-items: center;
  padding: 0 10px;
  gap: 10px;
  border: 1px solid #424242;
  border-radius: 22px;
  background: #2e2e2e;
}

.search svg { width: 22px; height: 22px; fill: none; stroke: #8c8c8c; stroke-width: 2; }

.search input { width: 100%; min-width: 0; padding: 0; border: 0; background: none; }

.search input::placeholder { color: #696969; opacity: 1; }

.sort {
  min-width: 0;
  border: 1px solid #424242;
  border-radius: 22px;
  background: #2e2e2e;
}

.sort-icon {
  position: absolute;
  left: 11px;
  width: 20px;
  height: 16px;
  fill: none;
  stroke: #8c8c8c;
  stroke-width: 1.8;
}

.picker.sort select { padding: 0 32px 0 41px; }

/* Country list */
.countries {
  display: flex;
  flex-direction: column;
  gap: 19px;
  list-style: none;
}

.country {
  display: flex;
  align-items: center;
  height: 88px;
  padding: 0 19px;
}

.flag { width: 46px; height: 46px; border-radius: 50%; }

.names { flex: 1; margin-left: 19px; }

.names h2 { font-size: 18px; font-weight: 500; line-height: 28px; }

.names p { color: #868e96; font-size: 14px; line-height: 22px; }

.prices { text-align: right; }

.prices b { display: block; font-size: 21px; font-weight: 500; line-height: 31px; }

.prices div { display: flex; align-items: center; justify-content: flex-end; gap: 12px; }

.usd { color: #868e96; font-size: 19px; line-height: 30px; }

.delta {
  padding: 0 11px;
  border-radius: 11px;
  background: #293830;
  color: #63e6be;
  font-size: 13px;
  font-weight: 700;
  line-height: 22px;
}

/* Chart */
.stage { flex: 1; min-width: 0; }

.chart { height: 300px; padding: 24px 24px 0 25px; }

.plot { position: relative; height: 204px; }

.bars {
  display: grid;
  grid-template-columns: repeat(53, minmax(0, 1fr));
  align-items: end;
  height: 100%;
}

.bars i { margin: 0 2px; background: #a8adb1; }

.base-line {
  position: absolute;
  inset: auto 0 145px;
  height: 1px;
  background: #fff;
  color: #fff;
  font-size: 14px;
  line-height: 24px;
  text-align: right;
}

.base-line span { padding-right: 6px; }

.labels {
  display: grid;
  grid-template-columns: repeat(53, minmax(0, 1fr));
  margin-top: 16px;
  color: #828282;
  font-size: 14px;
  line-height: 22px;
  white-space: nowrap;
}

.labels span { justify-self: center; }
.labels .first { justify-self: start; }
.labels .last { justify-self: end; }

/* Map */
.map { display: block; width: 100%; overflow: hidden; }

.map path {
  stroke: rgba(255, 255, 255, .7);
  stroke-width: 1.5px;
  stroke-linejoin: round;
  vector-effect: non-scaling-stroke;
}

.map .borders, .map .borders path { fill: none; stroke: #f1f2f3; stroke-width: 1.6px; }

/* Overlay scroll indicators */
.scroll-y, .scroll-x { position: absolute; background: rgba(110, 110, 110, .6); }
.scroll-y { top: 0; right: 0; width: 5px; height: 76%; }
.scroll-x { bottom: 0; left: 600px; right: 63px; height: 5px; }
```
